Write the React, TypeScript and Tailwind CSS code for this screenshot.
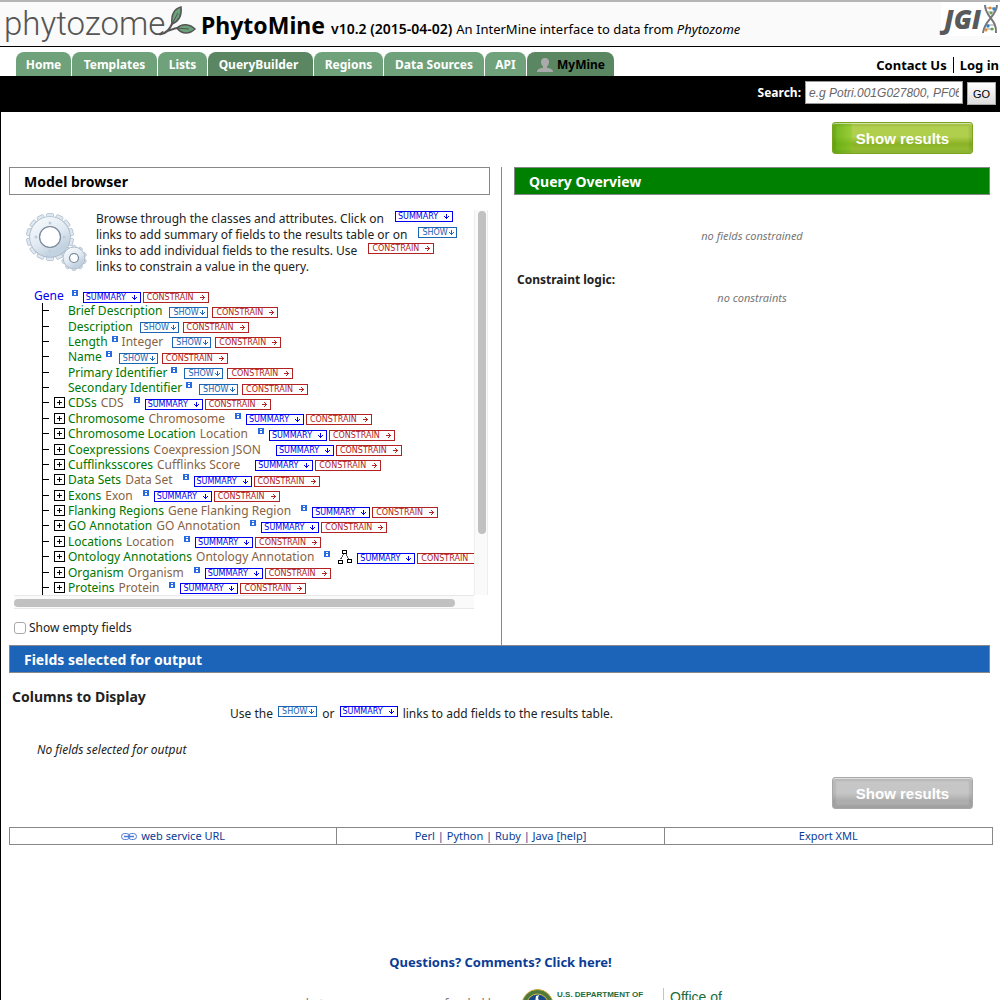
import React from "react";

type Kind = "summary" | "show" | "constrain";

const badgeStyles: Record<Kind, string> = {
  summary: "w-[58px] border-[#0000ee] text-[#0000ee] pl-[2px] pr-[3px]",
  show: "w-[39px] border-[#1c64b4] text-[#1c64b4] pl-[3px] pr-[2px]",
  constrain: "w-[66px] border-[#b22222] text-[#b22222] pl-[3px] pr-[3px]",
};

function Badge({ kind, className = "" }: { kind: Kind; className?: string }) {
  return (
    <button
      type="button"
      className={`inline-flex h-[11px] shrink-0 items-center justify-between border bg-white font-['DejaVu_Sans'] text-[8px] leading-[9px] ${badgeStyles[kind]} ${className}`}
    >
      <span>{kind.toUpperCase()}</span>
      <svg width="5" height="5" viewBox="0 0 5 5" fill="currentColor" shapeRendering="crispEdges" aria-hidden="true">
        {kind === "constrain" ? (
          <path d="M0 2h5v1H0zM3 1h1v3H3zM2 0h1v1H2zM2 4h1v1H2z" />
        ) : (
          <path d="M2 0h1v5H2zM1 3h3v1H1zM0 2h1v1H0zM4 2h1v1H4z" />
        )}
      </svg>
    </button>
  );
}

function InfoIcon() {
  return (
    <svg className="mb-[5px] shrink-0" width="6" height="6" viewBox="0 0 6 6" shapeRendering="crispEdges" aria-label="info">
      <rect width="6" height="6" rx="1" fill="#2a6ae0" />
      <path d="M2 1h2v1H2zM2 3h2v2H2z" fill="#fff" />
    </svg>
  );
}

type Row = { name: string; type?: string; info?: boolean; kind: Kind; expand?: boolean; network?: boolean };

const rows: Row[] = [
  { name: "Brief Description", kind: "show" },
  { name: "Description", kind: "show" },
  { name: "Length", type: "Integer", info: true, kind: "show" },
  { name: "Name", info: true, kind: "show" },
  { name: "Primary Identifier", info: true, kind: "show" },
  { name: "Secondary Identifier", info: true, kind: "show" },
  { name: "CDSs", type: "CDS", info: true, kind: "summary", expand: true },
  { name: "Chromosome", type: "Chromosome", info: true, kind: "summary", expand: true },
  { name: "Chromosome Location", type: "Location", info: true, kind: "summary", expand: true },
  { name: "Coexpressions", type: "Coexpression JSON", kind: "summary", expand: true },
  { name: "Cufflinksscores", type: "Cufflinks Score", kind: "summary", expand: true },
  { name: "Data Sets", type: "Data Set", info: true, kind: "summary", expand: true },
  { name: "Exons", type: "Exon", info: true, kind: "summary", expand: true },
  { name: "Flanking Regions", type: "Gene Flanking Region", info: true, kind: "summary", expand: true },
  { name: "GO Annotation", type: "GO Annotation", info: true, kind: "summary", expand: true },
  { name: "Locations", type: "Location", info: true, kind: "summary", expand: true },
  { name: "Ontology Annotations", type: "Ontology Annotation", info: true, kind: "summary", expand: true, network: true },
  { name: "Organism", type: "Organism", info: true, kind: "summary", expand: true },
  { name: "Proteins", type: "Protein", info: true, kind: "summary", expand: true },
];

function TreeRow({ row }: { row: Row }) {
  const attribute = row.kind === "show";
  return (
    <li className="flex min-h-0 flex-1 items-center border-l border-black leading-[15px]">
      <span className="h-px w-[6px] shrink-0 bg-black" />
      <span className="ml-[5px] flex w-[14px] shrink-0">
        {row.expand && (
          <button type="button" aria-label={`Expand ${row.name}`} className="h-[11px] w-[11px]">
            <svg width="11" height="11" viewBox="0 0 11 11" shapeRendering="crispEdges">
              <path d="M.5.5h10v10H.5zM3 5.5h5M5.5 3v5" fill="none" stroke="#000" />
            </svg>
          </button>
        )}
      </span>
      <span className="shrink-0 text-[#007700]">{row.name}</span>
      {attribute && row.info && <span className="ml-1 flex"><InfoIcon /></span>}
      {row.type && <span className="ml-1 shrink-0 text-[#876445]">{row.type}</span>}
      {!attribute && row.info && <span className="ml-[10px] flex"><InfoIcon /></span>}
      {row.network && (
        <svg className="ml-2 shrink-0" width="14" height="14" viewBox="0 0 14 14" shapeRendering="crispEdges">
          <path d="M5.5 4 2.5 9.500M8 4l3 5.500" stroke="#555" fill="none" />
          <path d="M4.500.5h4v3h-4zM.5 10h4v3h-4zM9.500 9.500h4v3h-4z" stroke="#000" fill="#fff" />
        </svg>
      )}
      <Badge kind={row.kind} className={`mt-[3px] ${attribute ? (row.type ? "ml-[9px]" : "ml-[7px]") : row.network ? "ml-[5px]" : row.info ? "ml-[5px]" : "ml-[15px]"}`} />
      <Badge kind="constrain" className={`mt-[3px] ${attribute ? "ml-1" : "ml-[2px]"}`} />
    </li>
  );
}

function Gear({ cx, cy, r, hole, teeth }: { cx: number; cy: number; r: number; hole: number; teeth: number }) {
  return (
    <g transform={`translate(${cx} ${cy})`}>
      {Array.from({ length: teeth }, (_, i) => (
        <rect
          key={i}
          x={-r * 0.15}
          y={-r}
          width={r * 0.3}
          height={r * 0.3}
          rx="1"
          fill="#dfe8f0"
          stroke="#a9b8c8"
          strokeWidth=".7"
          transform={`rotate(${(360 / teeth) * i})`}
        />
      ))}
      <circle r={(r * 0.86 + hole) / 2} fill="none" stroke="#a9b8c8" strokeWidth={r * 0.86 - hole + 1} />
      <circle r={(r * 0.86 + hole) / 2} fill="none" stroke="url(#metal)" strokeWidth={r * 0.86 - hole - 0.5} />
      <circle r={hole} fill="none" stroke="#7d8b9b" strokeWidth="1.200" />
    </g>
  );
}

function Gears() {
  return (
    <svg className="shrink-0" width="62" height="60" viewBox="0 0 62 60" aria-hidden="true">
      <defs>
        <linearGradient id="metal" x1="0" y1="0" x2="0.600" y2="1">
          <stop offset="0" stopColor="#f4f8fb" />
          <stop offset=".6" stopColor="#e0e9f2" />
          <stop offset="1" stopColor="#c3d2e0" />
        </linearGradient>
      </defs>
      <Gear cx={24} cy={24} r={23.5} hole={10.5} teeth={14} />
      <Gear cx={48} cy={45} r={12.5} hole={4.5} teeth={10} />
      {[[24, 10], [24, 38], [10, 24], [38, 24]].map(([x, y]) => (
        <circle key={`${x}-${y}`} cx={x} cy={y} r="1.500" fill="#bccddd" />
      ))}
    </svg>
  );
}

function ShowResults({ disabled = false }: { disabled?: boolean }) {
  return (
    <button
      type="button"
      disabled={disabled}
      className={`flex h-8 w-[141px] items-center justify-center rounded-[3px] border pt-px font-['Liberation_Sans'] text-[15px] font-bold text-white shadow-[inset_0_1px_0_rgba(255,255,255,0.55),inset_0_0_2px_3px_rgba(0,0,0,0.07)] ${
        disabled
          ? "border-[#a8a8a8] bg-linear-to-b from-[#c6c6c6] from-50% to-[#adadad] to-75%"
          : "border-[#76a51c] bg-[linear-gradient(to_right,rgba(90,170,10,0.7),rgba(120,200,30,0.45)_13%,transparent_14%),linear-gradient(to_bottom,#b0cf4c_45%,#8ab226_70%,#9cc43a)]"
      }`}
    >
      Show results
    </button>
  );
}

const tabs = [
  { label: "Home", width: "w-[55px]" },
  { label: "Templates", width: "w-[85px]" },
  { label: "Lists", width: "w-[49px]" },
  { label: "QueryBuilder", width: "w-[105px]", dark: true },
  { label: "Regions", width: "w-[69px]" },
  { label: "Data Sources", width: "w-[100px]" },
  { label: "API", width: "w-[41px]" },
];

export default function App() {
  return (
    <div className="flex h-screen flex-col overflow-hidden bg-white font-['Noto_Sans',sans-serif] text-[12px] leading-4 text-[#222]">
      <header className="flex h-[47px] shrink-0 border-t-2 border-b border-t-[#b5b5b5] border-b-black bg-[#fafafa] text-black">
        <a href="#home" className="relative w-[196px] shrink-0 pt-px pl-1 font-['Roboto'] text-[33px] leading-[42px] text-[#555] font-light" aria-label="phytozome">
          phytozome
          <svg className="absolute top-1 left-[155px]" width="42" height="30" viewBox="0 0 42 30" aria-hidden="true">
            <path d="M4 28C9 29 14 25 18 16M10 26c6-2 9-4 13-4" fill="none" stroke="#555" strokeWidth="2" />
            <path d="M17 18C16 9 19 3 26 1c1 8-2 14-9 17z" fill="#6ba27a" stroke="#555" strokeWidth="1.500" />
            <path d="M17 18 23 7" stroke="#555" />
            <path d="M22 22c5-5 13-4 18 1-5 5-13 6-18-1z" fill="#6ba27a" stroke="#555" strokeWidth="1.500" />
            <path d="m22 22 12 1" stroke="#555" />
          </svg>
        </a>
        <div className="flex items-baseline pt-[7px] pl-[5px] whitespace-nowrap">
          <h1 className="text-[23px] leading-8 font-bold">PhytoMine</h1>
          <strong className="ml-[6px] text-[14px] font-semibold">v10.2 (2015-04-02)</strong>
          <span className="ml-1 text-[13px]">An InterMine interface to data from <i>Phytozome</i></span>
        </div>
        <a href="#jgi" className="ml-auto flex h-[34px] w-[59px] shrink-0 items-center bg-white text-[#58595b]" aria-label="JGI">
          <span className="w-[40px] pl-[3px] font-['Open_Sans'] text-[26px] font-extrabold italic">JGI</span>
          <svg width="19" height="30" viewBox="0 0 19 30" aria-hidden="true">
            <path d="M4 1C4 13 16 15 15 29M16 1C16 12 3 16 2 29" fill="none" stroke="#77787b" strokeWidth="2" />
            <path d="M5 4h10M7 8h6M6 21h7M4 25h9" stroke="#999" />
            <circle cx="9" cy="4" r="1.500" fill="#e98b2a" /><circle cx="13" cy="5" r="1.700" fill="#2f86c5" />
            <circle cx="10" cy="9" r="1.500" fill="#63a548" /><circle cx="7" cy="22" r="1.700" fill="#2f86c5" />
            <circle cx="11" cy="25" r="1.500" fill="#63a548" /><circle cx="5" cy="26" r="1.500" fill="#e98b2a" />
          </svg>
        </a>
      </header>

      <nav className="flex h-[29px] shrink-0 items-end pl-4 font-bold whitespace-nowrap text-white">
        <div className="flex gap-px">
          {tabs.map((tab) => (
            <a key={tab.label} href="#tab" className={`flex h-6 items-center justify-center rounded-t-lg pt-[2px] ${tab.width} ${tab.dark ? "bg-[#5a8762] pr-1" : "bg-[#6fa27a]"}`}>
              {tab.label}
            </a>
          ))}
          <a href="#mymine" className="flex h-6 w-[87px] items-center gap-1 rounded-t-lg bg-[#5a8762] pt-[2px] pl-[10px] text-black">
            <svg width="16" height="16" viewBox="0 0 16 16" fill="#aaa" aria-hidden="true">
              <path d="M8 1c3 0 4 2 4 4s-1 4-2 4.500V11c3 0 6 1 6 4H0c0-3 3-4 6-4V9.500C5 9 4 7 4 5s1-4 4-4z" />
            </svg>
            MyMine
          </a>
        </div>
        <div className="ml-auto flex h-[22px] items-center text-[13px] text-black">
          <a href="#contact">Contact Us</a>
          <span className="mx-[6px] h-4 w-px bg-black" />
          <a href="#login" className="pr-px">Log in</a>
        </div>
      </nav>

      <form className="flex h-9 shrink-0 items-center justify-end bg-black pr-1 pb-[3px]" onSubmit={(e) => e.preventDefault()}>
        <label htmlFor="search" className="mr-1 font-bold text-white">Search:</label>
        <input
          id="search"
          placeholder="e.g Potri.001G027800, PF06"
          className="h-[23px] w-[158px] border border-[#999] bg-white px-[3px] font-['Liberation_Sans'] text-[12px] text-black italic placeholder:text-[#666]"
        />
        <button type="submit" className="mt-[2px] ml-1 h-[23px] w-[29px] border border-[#aaa] bg-linear-to-b from-white to-[#ddd] font-['Liberation_Sans'] text-[11px] text-black">GO</button>
      </form>

      <main className="grow border-l border-black">
        <div className="flex justify-end pt-[10px] pr-[27px] pb-[13px]">
          <ShowResults />
        </div>

        <div className="grid grid-cols-[493fr_488fr] pr-[10px] pl-2">
          <section className="border-r border-[#888] pr-[11px]">
            <h2 className="h-7 border border-[#888] pl-[14px] text-[14px] leading-[27px] font-bold text-black">Model browser</h2>
            <div className="mt-[15px] ml-[5px] grid grid-cols-[1fr_16px] grid-rows-[385px_14px]">
              <div className="overflow-hidden">
                <div className="flex">
                  <div className="ml-3 pt-[3px]"><Gears /></div>
                  <p className="ml-2 pt-px whitespace-nowrap">
                    Browse through the classes and attributes. Click on <Badge kind="summary" className="ml-2 align-top" />
                    <br />
                    links to add summary of fields to the results table or on <Badge kind="show" className="ml-2 align-top" />
                    <br />
                    links to add individual fields to the results. Use <Badge kind="constrain" className="ml-2 align-top" />
                    <br />
                    links to constrain a value in the query.
                  </p>
                </div>
                <div className="mt-[13px] flex h-[307px] flex-col whitespace-nowrap">
                  <div className="flex h-[15px] items-center pl-5">
                    <a href="#gene" className="mr-2 text-[#0000ee]">Gene</a>
                    <InfoIcon />
                    <Badge kind="summary" className="mt-[3px] ml-[5px]" />
                    <Badge kind="constrain" className="mt-[3px] ml-[2px]" />
                  </div>
                  <ul className="ml-7 flex min-h-0 flex-1 flex-col">
                    {rows.map((row) => <TreeRow key={row.name} row={row} />)}
                  </ul>
                </div>
              </div>
              <div className="mr-[2px] border-x border-[#eee] bg-[#fafafa] pt-px pl-[3px]">
                <div className="h-[323px] w-2 rounded-full bg-[#c1c1c1]" />
              </div>
              <div className="border-y border-[#e8e8e8] bg-[#fafafa] pt-[3px]">
                <div className="h-2 w-[441px] rounded-full bg-[#c1c1c1]" />
              </div>
            </div>
            <label className="mt-[11px] mb-[9px] ml-[5px] flex h-4 items-center gap-[3px]">
              <input type="checkbox" className="h-3 w-3 appearance-none rounded-[3px] border border-[#aaa] bg-white" />
              Show empty fields
            </label>
          </section>

          <section className="pl-3">
            <h2 className="h-7 border border-[#888] bg-[#008000] pl-[14px] text-[14px] leading-[27px] font-bold text-white">Query Overview</h2>
            <p className="mt-[33px] text-center text-[11px] text-[#777] italic">no fields constrained</p>
            <h3 className="mt-7 pl-[3px] font-bold">Constraint logic:</h3>
            <p className="mt-[2px] text-center text-[11px] text-[#777] italic">no constraints</p>
          </section>
        </div>

        <section className="pr-[10px] pl-2">
          <h2 className="h-7 border border-[#888] bg-[#1c64b8] pl-[14px] text-[14px] leading-[27px] font-bold text-white">Fields selected for output</h2>
          <h3 className="mt-4 pl-[3px] text-[14px] font-bold">Columns to Display</h3>
          <p className="mt-px pl-[221px]">
            Use the <Badge kind="show" className="mx-[2px] align-top" /> or <Badge kind="summary" className="mx-[2px] align-top" /> links to add fields to the results table.
          </p>
          <p className="mt-5 pl-7 italic">No fields selected for output</p>
        </section>

        <div className="flex justify-end pt-[19px] pr-[27px] pb-[18px]">
          <ShowResults disabled />
        </div>

        <div className="mr-[7px] ml-2 grid h-[18px] grid-cols-3 divide-x divide-[#888] border border-[#888] text-center text-[11px] text-[#0a3c96]">
          <a href="#url" className="flex items-center justify-center gap-1">
            <svg width="16" height="7" viewBox="0 0 16 7" fill="none" stroke="#4a78d8" aria-hidden="true">
              <rect x=".5" y=".5" width="8" height="6" rx="3" /><rect x="7.500" y=".5" width="8" height="6" rx="3" /><path d="M3 3.500h10" strokeWidth="1.500" />
            </svg>
            web service URL
          </a>
          <div>
            <a href="#perl">Perl</a> | <a href="#python">Python</a> | <a href="#ruby">Ruby</a> | <a href="#java">Java</a> <a href="#help">[help]</a>
          </div>
          <a href="#xml">Export XML</a>
        </div>

        <p className="mt-[109px] text-center text-[13px] font-bold text-[#0a3c96]"><a href="#contact">Questions? Comments? Click here!</a></p>

        <footer className="mt-[18px] flex h-12 justify-center pl-[5px]">
          <span className="mt-2 w-[217px] text-right whitespace-nowrap text-[#777]">phytozome resources are funded by</span>
          <svg className="ml-5 shrink-0" width="33" height="33" viewBox="0 0 33 33" aria-hidden="true">
            <circle cx="16.500" cy="17" r="15.500" fill="#4d7a3a" stroke="#c9a83c" />
            <circle cx="16.500" cy="17" r="11" fill="#174a86" stroke="#d8bd55" />
            <path d="m15 8 3-1-1 3 2 5h-5z" fill="#fff" />
          </svg>
          <div className="ml-[3px] w-[106px] font-['Liberation_Sans'] text-[8px] leading-[14px] font-bold whitespace-nowrap text-[#1d6b3c]">U.S. DEPARTMENT OF<div className="text-[20px] leading-6">ENERGY</div></div>
          <div className="border-l border-[#e3c765] pl-[6px] font-['Liberation_Sans'] text-[14px] leading-[18px] whitespace-nowrap text-[#1d6b3c]">Office of<br />Science</div>
        </footer>
      </main>
    </div>
  );
}
